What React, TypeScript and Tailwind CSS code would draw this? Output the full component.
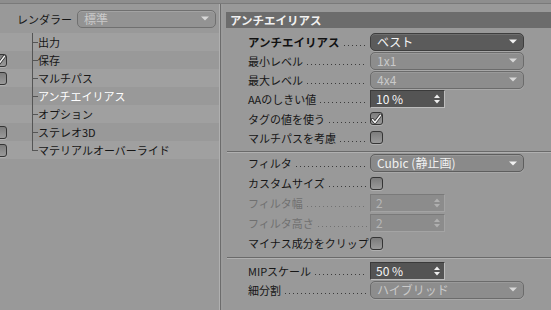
import React from 'react';

const font = { fontFamily: '"Noto Sans CJK JP", "Noto Sans", sans-serif' };

function Arrow({ light }: { light?: boolean }) {
  return (
    <svg width="8" height="5" viewBox="0 0 8 5" className="shrink-0">
      <path d="M0 0.5 L8 0.5 L4 4.5 Z" fill={light ? '#d8d8d8' : '#f2f2f2'} />
    </svg>
  );
}

function Spin({ dim }: { dim?: boolean }) {
  const c = dim ? '#b0b0b0' : '#eeeeee';
  return (
    <svg width="6" height="10" viewBox="0 0 6 10" className="shrink-0">
      <path d="M0 4 L6 4 L3 0.5 Z" fill={c} />
      <path d="M0 6 L6 6 L3 9.5 Z" fill={c} />
    </svg>
  );
}

function Check({ on }: { on?: boolean }) {
  return (
    <div className="w-[13px] h-[13px] shrink-0 rounded-[3px] border border-[#353535] bg-gradient-to-b from-[#7c7c7c] to-[#9a9a9a] flex items-center justify-center shadow-[0_1px_0_#b0b0b0]">
      {on && (
        <svg width="11" height="10" viewBox="0 0 11 10">
          <path d="M1.5 5.5 L4 8.5 L9.5 1.2" fill="none" stroke="#2a2a2a" strokeWidth="3" strokeLinecap="round" />
          <path d="M1.5 5.5 L4 8.5 L9.5 1.2" fill="none" stroke="#f4f4f4" strokeWidth="1.5" strokeLinecap="round" />
        </svg>
      )}
    </div>
  );
}

function Select({ value, dark, dim }: { value: string; dark?: boolean; dim?: boolean }) {
  const cls = dark
    ? 'bg-[#5b5b5b] border-[#3e3e3e] text-[#f4f4f4]'
    : dim
    ? 'bg-[#8d8d8d] border-[#6b6b6b] text-[#c9c9c9]'
    : 'bg-[#8a8a8a] border-[#5e5e5e] text-[#f0f0f0]';
  return (
    <div className={`w-[154px] h-[18px] rounded-[5px] border ${cls} flex items-center pl-[6px] pr-[6px] shadow-[inset_0_1px_0_rgba(255,255,255,0.12),0_1px_0_#a8a8a8]`}>
      <span className="flex-1 text-[12px] leading-[16px] whitespace-nowrap">{value}</span>
      <Arrow light={dim} />
    </div>
  );
}

function NumField({ value, dim }: { value: string; dim?: boolean }) {
  const cls = dim
    ? 'bg-[#8c8c8c] border-t-[#7a7a7a] border-l-[#7a7a7a] border-b-[#a4a4a4] border-r-[#a4a4a4] text-[#b6b6b6]'
    : 'bg-[#545454] border-t-[#3a3a3a] border-l-[#3a3a3a] border-b-[#bdbdbd] border-r-[#bdbdbd] text-[#f6f6f6]';
  return (
    <div className={`w-[75px] h-[18px] border ${cls} flex items-center pl-[5px] pr-[4px]`}>
      <span className="flex-1 text-[12px] leading-[16px]">{value}</span>
      <Spin dim={dim} />
    </div>
  );
}

function Row({
  label,
  bold,
  dim,
  h = 'h-[19px]',
  leader = true,
  children,
}: {
  label: string;
  bold?: boolean;
  dim?: boolean;
  h?: string;
  leader?: boolean;
  children: React.ReactNode;
}) {
  return (
    <div className={`${h} flex items-center pl-[25px]`}>
      <div className="w-[122px] shrink-0 flex items-center">
        <span
          className={`leading-[16px] whitespace-nowrap ${bold ? 'font-bold text-[#111] text-[11.5px]' : dim ? 'text-[11px] text-[#707070]' : 'text-[11px] text-[#161616]'}`}
        >
          {label}
        </span>
        {leader && (
          <div
            className={`flex-1 self-end mb-[4px] ml-[4px] mr-[3px] h-px bg-repeat-x bg-[length:4px_1px] ${
              dim
                ? 'bg-[linear-gradient(to_right,#727272_1px,transparent_1px)]'
                : 'bg-[linear-gradient(to_right,#3c3c3c_1px,transparent_1px)]'
            }`}
          />
        )}
      </div>
      {children}
    </div>
  );
}

const tree = [
  { t: '出力', c: null },
  { t: '保存', c: true },
  { t: 'マルチパス', c: false },
  { t: 'アンチエイリアス', c: null, sel: true },
  { t: 'オプション', c: null },
  { t: 'ステレオ3D', c: false },
  { t: 'マテリアルオーバーライド', c: false },
];

export default function App() {
  return (
    <div className="w-[551px] h-[310px] bg-[#999999] overflow-hidden flex flex-col" style={font}>
      <div className="h-[4px] bg-[#8e8e8e] border-b border-[#7a7a7a] shrink-0" />
      <div className="flex flex-1 min-h-0">
        {/* left panel */}
        <div className="w-[219px] shrink-0 flex flex-col">
          <div className="h-[26px] flex items-center pl-[17px] gap-[5px] pt-[3px]">
            <span className="text-[11px] leading-[16px] whitespace-nowrap text-[#161616]">レンダラー</span>
            <div className="w-[139px] h-[18px] rounded-[5px] border border-[#707070] bg-[#939393] flex items-center px-[6px] shadow-[inset_0_1px_0_rgba(255,255,255,0.15)]">
              <span className="flex-1 text-[12px] leading-[16px] text-[#c9c9c9]">標準</span>
              <Arrow light />
            </div>
          </div>
          <div className="mt-[3px] flex flex-col">
            {tree.map((r, i) => (
              <div key={r.t} className={`h-[18px] flex items-center ${i % 2 === 0 ? 'bg-[#a0a0a0]' : 'bg-[#999999]'}`}>
                <div className="w-[32px] shrink-0 flex items-center">
                  {r.c !== null && (
                    <div className="-ml-[6px]">
                      <Check on={r.c} />
                    </div>
                  )}
                </div>
                <div className="relative w-[6px] h-full shrink-0">
                  <div className={`absolute left-0 top-0 w-px bg-[#555] ${i === tree.length - 1 ? 'h-[9px]' : 'h-full'}`} />
                  <div className="absolute left-0 top-[9px] w-[6px] h-px bg-[#555]" />
                </div>
                <span className={`text-[11px] leading-[16px] whitespace-nowrap ${r.sel ? 'text-white' : 'text-[#161616]'}`}>{r.t}</span>
              </div>
            ))}
          </div>
        </div>
        {/* divider */}
        <div className="w-[4px] shrink-0 flex">
          <div className="w-px bg-[#b0b0b0]" />
          <div className="w-px bg-[#6c6c6c]" />
          <div className="w-[2px] bg-[#9c9c9c]" />
        </div>
        {/* right panel */}
        <div className="flex-1 flex flex-col pt-[8px]">
          <div className="h-[16px] bg-[#6c6c6c] flex items-center pl-[4px] ml-[3px]">
            <span className="text-[11.5px] font-bold text-[#f2f2f2] leading-[16px]">アンチエイリアス</span>
          </div>
          <div className="pt-[4px] flex flex-col">
            <Row label="アンチエイリアス" bold>
              <Select value="ベスト" dark />
            </Row>
            <Row label="最小レベル">
              <Select value="1x1" dim />
            </Row>
            <Row label="最大レベル">
              <Select value="4x4" dim />
            </Row>
            <Row label="AAのしきい値" h="h-[20px]">
              <NumField value="10 %" />
            </Row>
            <Row label="タグの値を使う">
              <Check on />
            </Row>
            <Row label="マルチパスを考慮">
              <Check />
            </Row>
          </div>
          <div className="mt-[4px] ml-[4px] h-[2px] border-t border-[#6a6a6a] border-b border-b-[#b0b0b0]" />
          <div className="flex flex-col">
            <Row label="フィルタ" h="h-[20px]">
              <Select value="Cubic (静止画)" />
            </Row>
            <Row label="カスタムサイズ" h="h-[20px]">
              <Check />
            </Row>
            <Row label="フィルタ幅" dim h="h-[20px]">
              <NumField value="2" dim />
            </Row>
            <Row label="フィルタ高さ" dim h="h-[20px]">
              <NumField value="2" dim />
            </Row>
            <Row label="マイナス成分をクリップ" h="h-[20px]" leader={false}>
              <Check />
            </Row>
          </div>
          <div className="mt-[4px] ml-[4px] h-[2px] border-t border-[#6a6a6a] border-b border-b-[#b0b0b0]" />
          <div className="pt-[2px] flex flex-col">
            <Row label="MIPスケール">
              <NumField value="50 %" />
            </Row>
            <Row label="細分割">
              <Select value="ハイブリッド" dim />
            </Row>
          </div>
        </div>
      </div>
    </div>
  );
}
